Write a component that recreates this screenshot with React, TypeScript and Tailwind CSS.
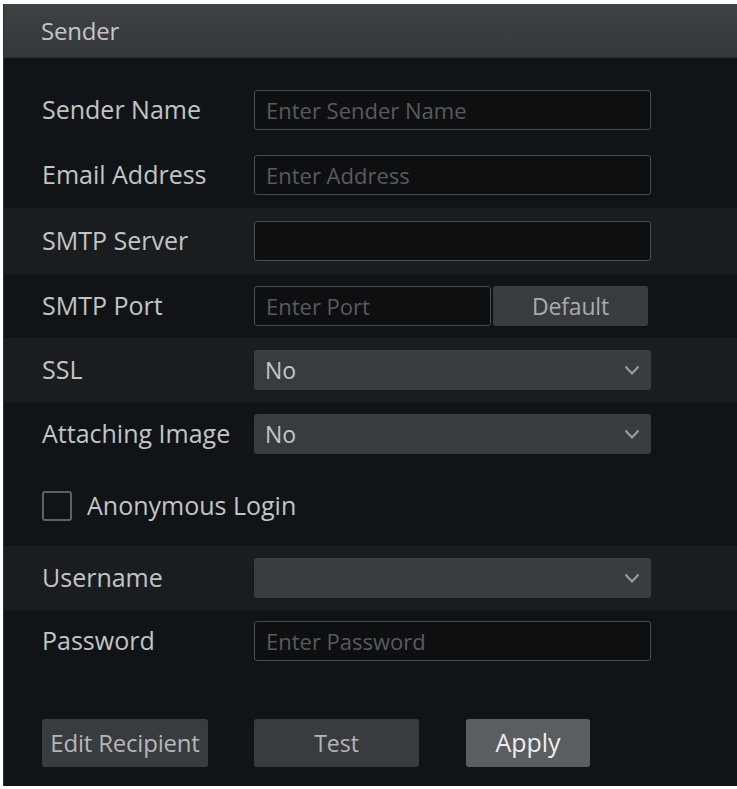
import type { ReactNode } from 'react'

const font = { fontFamily: '"Open Sans", "Noto Sans", sans-serif' }

function Chevron() {
  return (
    <svg width="18" height="12" viewBox="0 0 18 12" className="shrink-0">
      <path d="M2.5 2.5 L9 9.5 L15.5 2.5" fill="none" stroke="#999c9f" strokeWidth="2" />
    </svg>
  )
}

function Row({
  label,
  height,
  striped,
  children,
}: {
  label: string
  height: string
  striped?: boolean
  children: ReactNode
}) {
  return (
    <div className={`flex items-center pl-[38px] ${height} ${striped ? 'bg-[#1a1d20]' : ''}`}>
      <span className="w-[212px] shrink-0 text-[25px] text-[#c2c4c6] whitespace-nowrap">{label}</span>
      {children}
    </div>
  )
}

function TextBox({ placeholder, width = 'w-[397px]' }: { placeholder?: string; width?: string }) {
  return (
    <div className={`${width} h-[40px] border border-[#4a4d50] rounded-[3px] bg-[#0d0f11] flex items-center px-[11px]`}>
      <span className="text-[22px] text-[#585b5e] whitespace-nowrap">{placeholder}</span>
    </div>
  )
}

function Select({ value }: { value?: string }) {
  return (
    <div className="w-[397px] h-[40px] rounded-[3px] bg-[#393c3f] flex items-center justify-between pl-[11px] pr-[10px]">
      <span className="text-[23px] text-[#c4c6c8]">{value}</span>
      <Chevron />
    </div>
  )
}

export default function App() {
  return (
    <div className="w-[737px] h-[789px] bg-white pt-[4px] pl-[3px] pb-[3px]" style={font}>
      <div className="h-full bg-[#111417] border-l border-[#2c2e30] flex flex-col">
        <div className="h-[54px] shrink-0 bg-gradient-to-b from-[#3f4245] to-[#35383b] border-b border-[#2a2c2e] flex items-center pl-[37px]">
          <span className="text-[24px] text-[#c3c5c7] tracking-[-0.2px]">Sender</span>
        </div>
        <div className="h-[20px]" />
        <Row label="Sender Name" height="h-[64px]">
          <TextBox placeholder="Enter Sender Name" />
        </Row>
        <Row label="Email Address" height="h-[66px]">
          <TextBox placeholder="Enter Address" />
        </Row>
        <Row label="SMTP Server" height="h-[66px]" striped>
          <TextBox />
        </Row>
        <Row label="SMTP Port" height="h-[64px]">
          <TextBox placeholder="Enter Port" width="w-[237px]" />
          <button className="ml-[2px] w-[155px] h-[40px] rounded-[3px] bg-[#393c3f] text-[23px] text-[#a9abad] tracking-[-0.2px]">
            Default
          </button>
        </Row>
        <Row label="SSL" height="h-[64px]" striped>
          <Select value="No" />
        </Row>
        <Row label="Attaching Image" height="h-[64px]">
          <Select value="No" />
        </Row>
        <div className="h-[80px] flex items-center pl-[38px] gap-[15px]">
          <span className="w-[30px] h-[30px] border-2 border-[#5f6265] rounded-[3px]" />
          <span className="text-[25px] text-[#c2c4c6]">Anonymous Login</span>
        </div>
        <Row label="Username" height="h-[64px]" striped>
          <Select />
        </Row>
        <Row label="Password" height="h-[62px]">
          <TextBox placeholder="Enter Password" />
        </Row>
        <div className="h-[47px]" />
        <div className="flex items-center pl-[38px] h-[48px]">
          <button className="w-[166px] h-[48px] rounded-[3px] bg-[#393c3f] text-[24px] text-[#b4b6b8] tracking-[-0.2px] whitespace-nowrap">
            Edit Recipient
          </button>
          <button className="ml-[46px] w-[165px] h-[48px] rounded-[3px] bg-[#393c3f] text-[23px] text-[#b4b6b8]">
            Test
          </button>
          <button className="ml-[47px] w-[124px] h-[48px] rounded-[3px] bg-[#5b5e61] text-[25px] text-[#eeeeee]">
            Apply
          </button>
        </div>
      </div>
    </div>
  )
}
